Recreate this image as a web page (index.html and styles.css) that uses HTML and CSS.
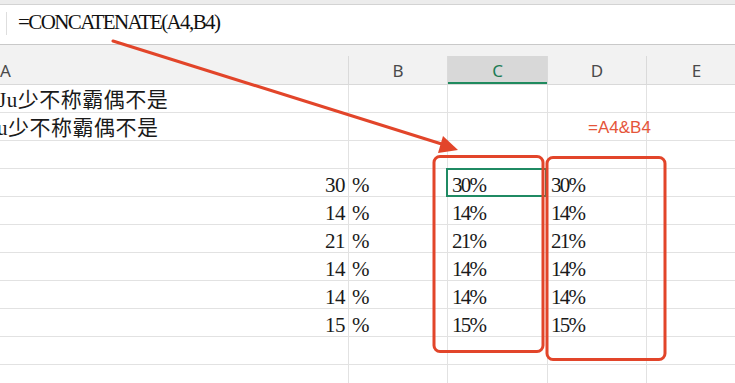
FILE: index.html
```html
<!DOCTYPE html>
<html lang="zh">
<head>
<meta charset="utf-8">
<title>Sheet</title>
<link rel="stylesheet" href="styles.css">
</head>
<body>
<div class="app">
  <div class="topstrip"></div>
  <div class="formula">
    <span class="divider"></span>
    <span class="ftext">=CONCATENATE(A4,B4)</span>
  </div>
  <div class="head">
    <div class="hcell ha">A</div>
    <div class="hcell">B</div>
    <div class="hcell hsel">C</div>
    <div class="hcell">D</div>
    <div class="hcell">E</div>
  </div>
  <div class="grid">
    <div class="cell ca"><span class="txt1">Ju少不称霸偶不是</span></div>
    <div class="cell"></div><div class="cell"></div><div class="cell"></div><div class="cell"></div>

    <div class="cell ca"><span class="txt2">u少不称霸偶不是</span></div>
    <div class="cell"></div><div class="cell"></div><div class="cell note">=A4&amp;B4</div><div class="cell"></div>

    <div class="cell ca"></div>
    <div class="cell"></div><div class="cell"></div><div class="cell"></div><div class="cell"></div>

    <div class="cell ca num">30</div>
    <div class="cell pct">%</div><div class="cell val sel">30%</div><div class="cell val vd">30%</div><div class="cell"></div>

    <div class="cell ca num">14</div>
    <div class="cell pct">%</div><div class="cell val">14%</div><div class="cell val vd">14%</div><div class="cell"></div>

    <div class="cell ca num">21</div>
    <div class="cell pct">%</div><div class="cell val">21%</div><div class="cell val vd">21%</div><div class="cell"></div>

    <div class="cell ca num">14</div>
    <div class="cell pct">%</div><div class="cell val">14%</div><div class="cell val vd">14%</div><div class="cell"></div>

    <div class="cell ca num">14</div>
    <div class="cell pct">%</div><div class="cell val">14%</div><div class="cell val vd">14%</div><div class="cell"></div>

    <div class="cell ca num">15</div>
    <div class="cell pct">%</div><div class="cell val">15%</div><div class="cell val vd">15%</div><div class="cell"></div>

    <div class="cell ca"></div>
    <div class="cell"></div><div class="cell"></div><div class="cell"></div><div class="cell"></div>

    <div class="cell ca"></div>
    <div class="cell"></div><div class="cell"></div><div class="cell"></div><div class="cell"></div>
  </div>

  <svg class="annot" width="735" height="383" viewBox="0 0 735 383" xmlns="http://www.w3.org/2000/svg">
    <line x1="113" y1="41" x2="448" y2="146" stroke="#e2452a" stroke-width="3" stroke-linecap="round"/>
    <polygon points="443,136 458,150 438,153" fill="#e2452a"/>
    <rect x="434" y="156.5" width="109" height="195" rx="6" fill="none" stroke="#e2452a" stroke-width="3"/>
    <rect x="547" y="157.5" width="118" height="202" rx="6" fill="none" stroke="#e2452a" stroke-width="3"/>
  </svg>
</div>
</body>
</html>
```

FILE: styles.css
```css
html, body {
  margin: 0;
  padding: 0;
  background: #ffffff;
}

body {
  width: 735px;
  height: 383px;
  overflow: hidden;
  font-family: "Liberation Serif", "Noto Sans CJK SC", serif;
  color: #1a1a1a;
}

.app {
  position: relative;
  width: 735px;
  height: 383px;
  overflow: hidden;
}

.topstrip {
  height: 4px;
  background: #ececec;
  border-bottom: 1px solid #d3d3d3;
}

.formula {
  height: 39px;
  border-bottom: 1px solid #c9c9c9;
  display: flex;
  align-items: flex-start;
  background: #ffffff;
}

.divider {
  width: 1px;
  height: 23px;
  margin: 7px 0 0 6px;
  background: #dedede;
}

.ftext {
  margin-left: 11px;
  font-family: "Liberation Serif", serif;
  font-size: 21px;
  letter-spacing: -1.6px;
  line-height: 35px;
  color: #111111;
}

.head {
  height: 40px;
  box-sizing: border-box;
  padding-top: 11px;
  background: #f2f2f2;
  border-bottom: 1px solid #d9d9d9;
  display: grid;
  grid-template-columns: 349px 99px 100px 99px 100px;
  width: 760px;
}

.hcell {
  height: 28px;
  border-right: 1px solid #dadada;
  display: flex;
  justify-content: center;
  font-family: "Noto Sans", "Liberation Sans", sans-serif;
  font-size: 17px;
  line-height: 29px;
  color: #4a4a4a;
}

.hcell.ha {
  justify-content: flex-start;
  padding-left: 0;
}

.hcell.hsel {
  background: #d8d8d8;
  color: #1d7c55;
  box-shadow: inset 0 -2px 0 #1f8a5e;
}

.grid {
  display: grid;
  grid-template-columns: 349px 99px 100px 99px 100px;
  grid-auto-rows: 28px;
  width: 760px;
}

.cell {
  position: relative;
  border-right: 1px solid #e2e2e2;
  border-bottom: 1px solid #e2e2e2;
  font-size: 21px;
  line-height: 33px;
  white-space: nowrap;
  overflow: visible;
}

.ca {
  overflow: hidden;
}

.txt1, .txt2 {
  display: block;
  font-size: 21px;
  letter-spacing: 0.5px;
  line-height: 31px;
}

.txt1 {
  margin-left: -2px;
}

.txt2 {
  margin-left: -3px;
}

.num {
  text-align: right;
  padding-right: 3px;
}

.pct {
  padding-left: 3px;
}

.val {
  padding-left: 4px;
  letter-spacing: -1.8px;
}

.val.vd {
  padding-left: 3px;
}

.num, .pct {
  letter-spacing: -0.5px;
}

.note {
  padding-left: 40px;
  font-family: "Liberation Sans", "Noto Sans", sans-serif;
  font-size: 17px;
  line-height: 30px;
  color: #e5553a;
}

.sel::after {
  content: "";
  position: absolute;
  top: -1px;
  left: -2px;
  right: 0;
  bottom: -1px;
  border: 2px solid #1f8a63;
}

.annot {
  position: absolute;
  top: 0;
  left: 0;
  pointer-events: none;
}
```
